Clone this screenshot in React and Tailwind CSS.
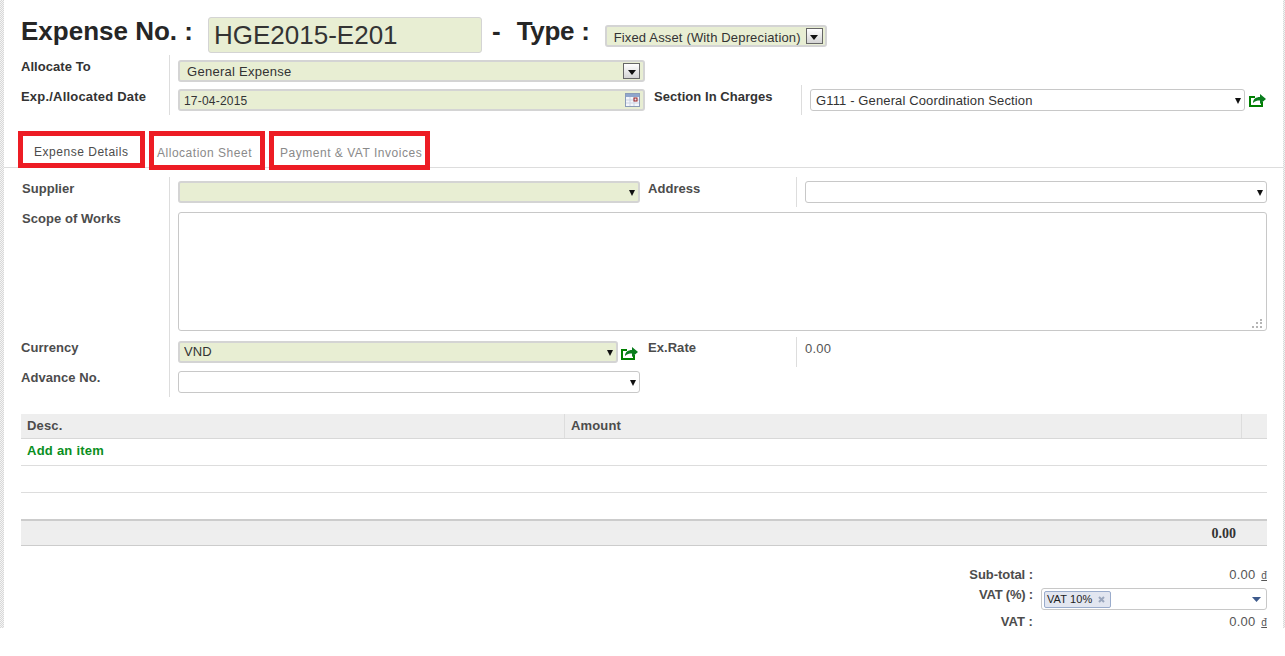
import React from "react";

const fieldText = "text-[13px] tracking-[0.13px] text-[#333]";
const stripe = "shrink-0 bg-[repeating-conic-gradient(#d8d8d8_0_25%,#f4f4f4_0_50%)] bg-[length:2px_2px]";

function Label({ children, className = "" }) {
  return <div className={`text-[13px] font-bold leading-[15px] tracking-[0.05px] text-[#4c4c4c] ${className}`}>{children}</div>;
}

function Caret() {
  return (
    <svg width="6" height="7" viewBox="0 0 6 7" className="shrink-0">
      <path d="M0 1h6L3 7z" fill="#111" />
    </svg>
  );
}

function BoxCaret() {
  return (
    <span className="flex h-[16px] w-[17px] shrink-0 items-center justify-center border border-[#666] bg-gradient-to-b from-white to-[#d4d4d4]">
      <svg width="8" height="5" viewBox="0 0 8 5" className="mt-[2px]">
        <path d="M0 0h8L4 5z" fill="#111" />
      </svg>
    </span>
  );
}

function ShareIcon() {
  return (
    <svg width="17" height="14" viewBox="0 0 17 14" className="shrink-0">
      <path d="M6 4H1v9h12V9" fill="none" stroke="#008000" strokeWidth="2" />
      <path d="M4 10c0-4 3-6 7-6V1l6 5-6 5V7.5c-3 0-5 .5-7 2.5z" fill="#0a7d1e" />
    </svg>
  );
}

function CalendarIcon() {
  return (
    <svg width="15" height="14" viewBox="0 0 15 14" className="shrink-0">
      <rect x="0.5" y="0.5" width="14" height="13" fill="#f4f6fb" stroke="#8a9bb8" />
      <rect x="1" y="1" width="13" height="3" fill="#8fa6cc" />
      <path d="M1 7h13M1 10h13M5 4v9M9 4v9" stroke="#cdd5e4" />
      <rect x="9" y="5" width="3" height="3" fill="none" stroke="#9c1c1c" />
    </svg>
  );
}

function Select({ value, green, width }) {
  return (
    <div className={`flex h-[22px] items-center rounded-[3px] pr-[3px] ${fieldText} ${green ? "border-2 border-[#d4d4d4] bg-[#e8eed3] pl-[4px]" : "border border-[#c8c8c8] bg-white pl-[5px]"} ${width}`}>
      <span className={`flex-1 truncate ${green ? "" : "pt-[1px]"}`}>{value}</span>
      <Caret />
    </div>
  );
}

function Tab({ children, className, active }) {
  return (
    <div className={`flex items-center border-[5px] border-[#ed1c24] bg-white pt-[4px] text-[12px] tracking-[0.52px] ${active ? "text-[#4c4c4c]" : "text-[#8a8a8a]"} ${className}`}>
      {children}
    </div>
  );
}

function Amount() {
  return (
    <span className="text-[13px] tracking-[0.2px] text-[#555]">
      0.00 <span className="ml-[2px] text-[10px] underline">đ</span>
    </span>
  );
}

export default function App() {
  return (
    <div className="font-['Liberation_Sans',Arial,sans-serif]">
      <div className="flex h-[628px] overflow-hidden bg-white">
        <div className={`w-[4px] ${stripe}`} />

        <div className="min-w-0 flex-1">
          {/* title row */}
          <div className="flex pl-[17px] pt-[17px]">
            <div className="mt-[-1px] w-[187px] text-[26px] font-bold leading-[30px] text-[#262626]">Expense No. :</div>
            <div className="flex h-[36px] w-[274px] items-center rounded-[3px] border border-[#d4d4d4] bg-[#e8eed3] pl-[5px] text-[26px] text-[#333]">
              HGE2015-E201
            </div>
            <div className="ml-[10px] mt-[-1px] text-[26px] font-bold leading-[30px] text-[#262626]">-</div>
            <div className="ml-[16px] mt-[-1px] w-[88px] text-[26px] font-bold leading-[30px] tracking-[-0.3px] text-[#262626]">Type :</div>
            <div className={`mt-[8px] flex h-[22px] w-[222px] items-center justify-between rounded-[3px] border-2 border-[#d4d4d4] bg-[#e8eed3] pl-[7px] pr-[2px] ${fieldText}`}>
              <span className="whitespace-nowrap pt-[3px] tracking-[0.16px]">Fixed Asset (With Depreciation)</span>
              <BoxCaret />
            </div>
          </div>

          {/* allocate rows */}
          <div className="mt-[2px] pl-[17px]">
            <div className="flex h-[30px]">
              <Label className="w-[148px] pt-[4px] text-[#333]">Allocate To</Label>
              <div className="border-l border-[#ddd] pl-[8px] pt-[5px]">
                <div className={`flex h-[22px] w-[467px] items-center justify-between rounded-[3px] border-2 border-[#d4d4d4] bg-[#e8eed3] pl-[7px] pr-[3px] ${fieldText}`}>
                  <span className="pt-[1px] tracking-[0.27px]">General Expense</span>
                  <BoxCaret />
                </div>
              </div>
            </div>
            <div className="flex h-[30px]">
              <Label className="w-[148px] pt-[4px] text-[#333]"><span className="tracking-[0.2px]">Exp./Allocated Date</span></Label>
              <div className="border-l border-[#ddd] pl-[8px] pt-[4px]">
                <div className="flex h-[22px] w-[467px] items-center justify-between rounded-[3px] border-2 border-[#d4d4d4] bg-[#e8eed3] pl-[4px] pr-[3px] text-[12px] text-[#333]">
                  <span className="pt-[1px] tracking-[0.2px]">17-04-2015</span>
                  <CalendarIcon />
                </div>
              </div>
              <Label className="ml-[9px] w-[147px] pt-[4px] text-[#333]">Section In Charges</Label>
              <div className="flex items-start gap-[4px] border-l border-[#ddd] pl-[8px] pt-[4px]">
                <Select value="G111 - General Coordination Section" width="w-[435px]" />
                <div className="pt-[4px]"><ShareIcon /></div>
              </div>
            </div>
          </div>

          {/* tabs */}
          <div className="mt-[16px] flex h-[37px] items-start gap-[4px] border-b border-[#ddd] pl-[14px]">
            <Tab active className="h-[37px] w-[127px] pl-[11px]">Expense Details</Tab>
            <Tab className="h-[39px] w-[116px] pl-[3px]">Allocation Sheet</Tab>
            <Tab className="h-[39px] w-[161px] pl-[6px]">Payment &amp; VAT Invoices</Tab>
          </div>

          {/* main form */}
          <div className="mt-[9px] pl-[17px] pr-[16px]">
            <div className="flex h-[30px]">
              <Label className="w-[148px] pl-[1px] pt-[4px]">Supplier</Label>
              <div className="border-l border-[#ddd] pl-[8px] pt-[4px]">
                <Select green width="w-[462px]" />
              </div>
              <Label className="ml-[8px] w-[148px] pt-[4px]">Address</Label>
              <div className="flex-1 border-l border-[#ddd] pl-[8px] pt-[4px]">
                <Select width="w-full" />
              </div>
            </div>
            <div className="flex h-[130px]">
              <Label className="w-[148px] pl-[1px] pt-[4px]">Scope of Works</Label>
              <div className="flex-1 border-l border-[#ddd] pl-[8px] pt-[5px]">
                <div className="relative">
                  <textarea className="block h-[119px] w-full resize-none rounded-[3px] border border-[#c8c8c8] bg-white" />
                  <svg width="11" height="9" viewBox="0 0 11 9" className="absolute bottom-[3px] right-[5px]">
                    <path d="M9 0h2v2H9zM5 3h2v2H5zM9 3h2v2H9zM1 7h2v2H1zM5 7h2v2H5zM9 7h2v2H9z" fill="#b5b5b5" />
                  </svg>
                </div>
              </div>
            </div>
            <div className="flex h-[30px]">
              <Label className="w-[148px] pt-[3px]">Currency</Label>
              <div className="flex w-[479px] items-start gap-[3px] border-l border-[#ddd] pl-[8px] pt-[4px]">
                <Select green value="VND" width="w-[440px]" />
                <div className="pt-[5px]"><ShareIcon /></div>
              </div>
              <Label className="w-[148px] pt-[3px]">Ex.Rate</Label>
              <div className="border-l border-[#ddd] pl-[8px] pt-[4px] text-[13px] leading-[15px] tracking-[0.2px] text-[#555]">0.00</div>
            </div>
            <div className="flex h-[30px]">
              <Label className="w-[148px] pt-[3px]">Advance No.</Label>
              <div className="border-l border-[#ddd] pl-[8px] pt-[4px]">
                <Select width="w-[462px]" />
              </div>
            </div>

            {/* lines table */}
            <div className="mt-[17px] text-[13px]">
              <div className="flex h-[25px] items-center border-b border-[#d8d8d8] bg-[#eee] font-bold tracking-[0.15px] text-[#4c4c4c]">
                <div className="flex h-full w-[543px] items-center pl-[6px]">Desc.</div>
                <div className="flex h-full flex-1 items-center border-l border-[#ddd] pl-[6px]">Amount</div>
                <div className="h-full w-[26px] border-l border-[#ddd]" />
              </div>
              <div className="flex h-[27px] items-center border-b border-[#ddd] pb-[3px] pl-[6px] font-bold tracking-[0.25px] text-[#0a8f1e]">Add an item</div>
              <div className="h-[27px] border-b border-[#ddd]" />
              <div className="mt-[26px] flex h-[27px] items-center justify-end border-t-2 border-b border-[#ccc] bg-[#eee] pr-[31px] font-['Liberation_Serif',serif] text-[14px] font-bold text-[#333]">
                0.00
              </div>
            </div>

            {/* totals */}
            <div className="ml-auto mt-[21px] w-[300px]">
              <div className="flex h-[15px] items-center justify-between">
                <Label className="w-[66px] whitespace-nowrap text-right"><span className="tracking-[-0.05px]">Sub-total :</span></Label>
                <Amount />
              </div>
              <div className="mt-[6px] flex items-start justify-between">
                <Label className="mt-[-1px] w-[66px] whitespace-nowrap text-right"><span className="tracking-[-0.2px]">VAT (%) :</span></Label>
                <div className="flex h-[22px] w-[226px] items-center justify-between rounded-[3px] border border-[#c8c8c8] bg-white pl-[2px] pr-[5px]">
                  <span className="flex h-[17px] items-center gap-[6px] rounded-[2px] border border-[#9aaccc] bg-[#e2e6f0] pl-[2px] pr-[5px] text-[11px] tracking-[0.1px] text-[#222]">
                    VAT 10%
                    <svg width="7" height="7" viewBox="0 0 7 7">
                      <path d="M1 1l5 5M6 1L1 6" stroke="#9aa6bd" strokeWidth="2" />
                    </svg>
                  </span>
                  <svg width="9" height="5" viewBox="0 0 9 5">
                    <path d="M0 0h9L4.500 5z" fill="#3d5a8c" />
                  </svg>
                </div>
              </div>
              <div className="mt-[4px] flex h-[15px] items-center justify-between">
                <Label className="w-[66px] whitespace-nowrap text-right">VAT :</Label>
                <Amount />
              </div>
            </div>
          </div>
        </div>

        <div className={`w-[2px] ${stripe}`} />
      </div>
    </div>
  );
}
